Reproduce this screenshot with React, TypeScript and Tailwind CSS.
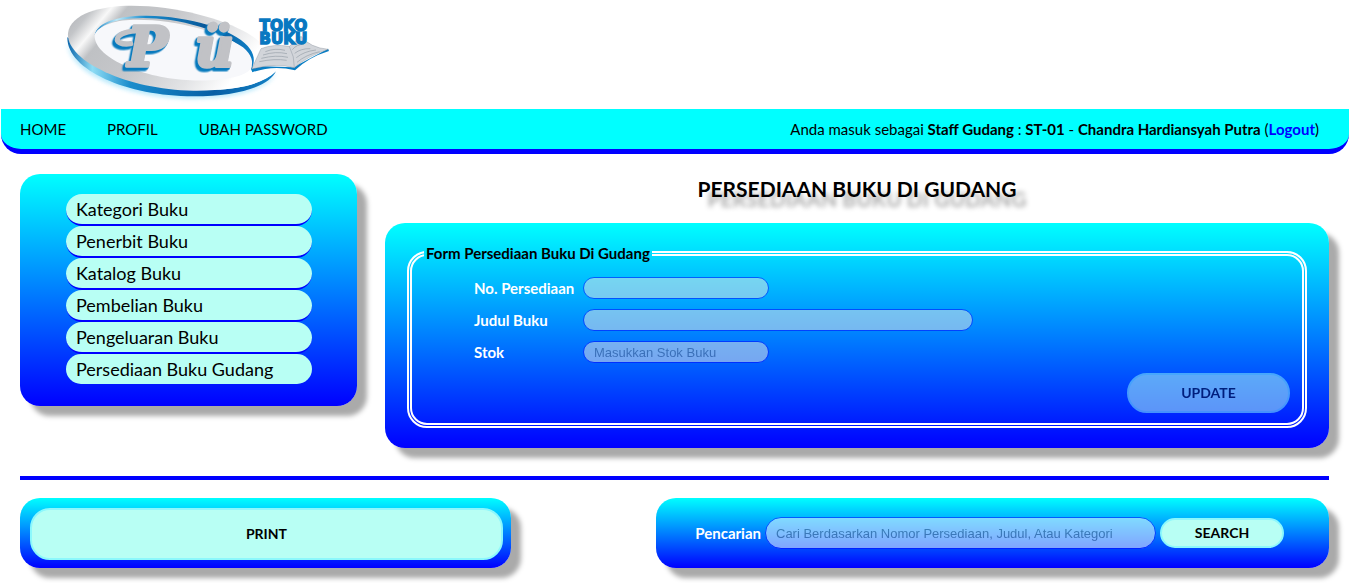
import type { ReactNode } from "react";

const menu = [
  "Kategori Buku",
  "Penerbit Buku",
  "Katalog Buku",
  "Pembelian Buku",
  "Pengeluaran Buku",
  "Persediaan Buku Gudang",
];

function Logo() {
  return (
    <svg viewBox="0 0 840 315" className="ml-[60px] block h-[105px] w-[280px]" role="img" aria-label="Toko Buku">
      <defs>
        <linearGradient id="ring" x1="0" y1="0" x2="1" y2="0.35">
          <stop offset="0" stopColor="#a9abb0" />
          <stop offset="0.12" stopColor="#c3c5c8" />
          <stop offset="0.2" stopColor="#f8f8f8" />
          <stop offset="0.27" stopColor="#bfc1c4" />
          <stop offset="0.5" stopColor="#c6c7ca" />
          <stop offset="0.8" stopColor="#e2e3e5" />
          <stop offset="1" stopColor="#ffffff" />
        </linearGradient>
        <linearGradient id="rim" x1="0" y1="0" x2="1" y2="0">
          <stop offset="0" stopColor="#0a66ac" />
          <stop offset="0.12" stopColor="#8edcf4" />
          <stop offset="0.3" stopColor="#1b8dcc" />
          <stop offset="0.7" stopColor="#075fa5" />
          <stop offset="1" stopColor="#1482c6" />
        </linearGradient>
        <linearGradient id="innerRim" x1="0" y1="0" x2="1" y2="0">
          <stop offset="0" stopColor="#1782c4" />
          <stop offset="0.14" stopColor="#bdeafa" />
          <stop offset="0.32" stopColor="#198bcc" />
          <stop offset="0.7" stopColor="#075799" />
          <stop offset="1" stopColor="#0f7fc6" />
        </linearGradient>
        <filter id="glow" x="-10%" y="-10%" width="120%" height="130%">
          <feGaussianBlur stdDeviation="7" />
        </filter>
        <filter id="relief" x="-10%" y="-10%" width="120%" height="120%" colorInterpolationFilters="sRGB">
          <feDropShadow dx="-4" dy="5" stdDeviation="0" floodColor="#087abd" result="near" />
          <feDropShadow in="near" dx="-4" dy="5" stdDeviation="0" floodColor="#087abd" />
        </filter>
      </defs>
      <path d="M22 125C24 222 205 296 400 296C535 296 625 265 648 220C610 257 535 275 410 277C210 271 50 212 22 125Z" fill="#a8e4fa" filter="url(#glow)" opacity="0.8" />
      <path d="M22 112C20 210 200 289 400 289C535 289 630 258 648 213C608 253 530 272 410 270L120 160Z" fill="url(#rim)" />
      <path d="M24 100C30 40 125 17 215 17C350 17 490 57 562 99C615 130 635 165 628 190C610 240 520 274 400 272C195 268 18 180 24 100Z" fill="url(#ring)" />
      <path d="M590 150C645 170 650 205 648 214C610 252 540 266 470 270C550 252 600 218 590 150Z" fill="#fff" />
      <path d="M104 105C112 65 180 46 260 47C390 49 520 88 563 138C584 162 586 183 575 207C579 160 520 110 420 80C330 53 240 48 180 60C140 68 112 86 104 105Z" fill="url(#innerRim)" />
      <path d="M104 105C112 80 160 60 220 59C350 57 490 98 549 142C575 165 582 185 572 207C550 234 470 246 380 240C240 232 100 170 104 105Z" fill="#f7f8fb" />
      <g filter="url(#relief)">
        <path d="M212 131C154 139 156 92 242 92" fill="none" stroke="#c1c2c6" strokeWidth="16" strokeLinecap="round" />
        <g
          fontFamily="DejaVu Serif"
          fontWeight="700"
          fontStyle="italic"
          fontSize="160"
          strokeLinejoin="round"
          fill="#c1c2c6"
          stroke="#c1c2c6"
          strokeWidth="10"
        >
          <text x="203" y="198">P</text>
          <text x="405" y="198">ü</text>
        </g>
      </g>
      <path d="M573 207L577 217Q640 194 705 211Q745 172 807 153L804 146L700 202L578 198Z" fill="#087dc4" />
      <path d="M603 146Q640 131 688 139L723 109Q750 143 805 148Q745 167 703 203Q645 188 575 207Z" fill="#d2d5da" stroke="#77818b" strokeWidth="1" />
      <path d="M688 139Q704 170 703 203" fill="none" stroke="#a0a8b0" strokeWidth="2" />
      <path d="M616 155Q645 143 675 151M609 165Q647 153 681 161M604 175Q648 164 684 172M598 185Q645 175 680 181M697 149Q711 132 732 133M704 160Q723 145 751 146M709 173Q732 154 768 150M711 187Q738 164 779 155" fill="none" stroke="#969fa8" strokeWidth="2" />
      <g fontFamily="DejaVu Sans" fontWeight="700" fontSize="46" fill="#0878c1" stroke="#0878c1" strokeWidth="4" textAnchor="middle">
        <text x="670" y="92">TOKO</text>
        <text x="670" y="132">BUKU</text>
      </g>
    </svg>
  );
}

function Panel({ className, children }: { className: string; children: ReactNode }) {
  return (
    <div className={`rounded-[20px] bg-linear-to-b/srgb from-[#00ffff] to-[#0000ff] shadow-[10px_10px_5px_#aaaaaa] ${className}`}>
      {children}
    </div>
  );
}

const field =
  "h-[22px] rounded-full border border-[#0000ff] bg-[#ebebe4] px-2.5 font-['Liberation_Sans',sans-serif] text-[13px] font-normal opacity-50 placeholder:text-[#757575] placeholder:opacity-100";

export default function App() {
  return (
    <div className="bg-white pb-[15px] font-[Lato,sans-serif] text-black">
      <header className="h-[109px]">
        <Logo />
      </header>
      <nav className="mx-px flex h-[45px] items-center justify-between rounded-b-[20px] border-b-[5px] border-[#0000ff] bg-[#00ffff] pr-[30px] pl-[19px]">
        <div className="flex gap-[41px] text-[15px]">
          <a href="#home">HOME</a>
          <a href="#profil">PROFIL</a>
          <a href="#password">UBAH PASSWORD</a>
        </div>
        <p className="text-[15px]">
          Anda masuk sebagai <b>Staff Gudang</b> : <b>ST-01</b> - <b>Chandra Hardiansyah Putra</b> (
          <a href="#logout" className="font-bold text-[#0000ff]">Logout</a>)
        </p>
      </nav>

      <div className="mt-5 mr-[21px] ml-5 flex items-start gap-7 border-b-4 border-[#0000ff] pb-7">
        <Panel className="w-[337px] shrink-0 pt-5 pr-[45px] pb-[22px] pl-[46px]">
          <ul>
            {menu.map((name) => (
              <li key={name} className="group">
                <a
                  href="#menu"
                  className="flex h-8 items-center rounded-[16px] border-b-2 border-[#0000ff] bg-[#b8fff4] px-2.5 text-lg group-last:h-[30px] group-last:rounded-[15px] group-last:border-b-0"
                >
                  {name}
                </a>
              </li>
            ))}
          </ul>
        </Panel>

        <main className="min-w-0 flex-1">
          <h1 className="mb-[19px] text-center text-[21px] leading-[30px] font-bold [text-shadow:10px_10px_5px_#aaaaaa]">
            PERSEDIAAN BUKU DI GUDANG
          </h1>
          <Panel className="p-5">
            <fieldset className="mx-0.5 rounded-[20px] border-[5px] border-double border-white px-3 pb-2.5">
              <legend className="px-0.5 text-[15px] leading-5 font-bold">Form Persediaan Buku Di Gudang</legend>
              <div className="mt-3.5 ml-[50px] grid grid-cols-[109px_1fr] items-center gap-y-2.5 text-[15px] leading-5 font-bold text-white">
                <label htmlFor="nomor">No. Persediaan</label>
                <input id="nomor" disabled className={`${field} w-[186px]`} />
                <label htmlFor="judul">Judul Buku</label>
                <input id="judul" disabled className={`${field} w-[390px]`} />
                <label htmlFor="stok">Stok</label>
                <input id="stok" disabled placeholder="Masukkan Stok Buku" className={`${field} w-[186px]`} />
              </div>
              <div className="mt-2.5 flex justify-end">
                <button disabled className="h-10 w-[163px] rounded-full border-2 border-[#8cf8fc] bg-[#b8fff4] text-sm font-bold opacity-50">
                  UPDATE
                </button>
              </div>
            </fieldset>
          </Panel>
        </main>
      </div>

      <div className="mt-[18px] mr-[21px] ml-5 flex justify-between">
        <Panel className="h-[70px] w-[37.5%] pt-2.5 pr-2 pb-2 pl-2.5">
          <button className="h-full w-full rounded-[20px] border-2 border-[#8cf8fc] bg-[#b8fff4] text-sm font-bold">PRINT</button>
        </Panel>
        <Panel className="flex h-[70px] w-[673px] items-center justify-end gap-1 pr-[45px]">
          <label htmlFor="cari" className="text-[15px] font-bold text-white">Pencarian</label>
          <input
            id="cari"
            placeholder="Cari Berdasarkan Nomor Persediaan, Judul, Atau Kategori"
            className="h-8 w-[391px] rounded-full border border-[#0000ff] bg-white px-2.5 font-['Liberation_Sans',sans-serif] text-[13px] opacity-50 placeholder:text-[#757575] placeholder:opacity-100"
          />
          <button className="h-[30px] w-[124px] rounded-full border-2 border-[#8cf8fc] bg-[#b8fff4] text-sm font-bold">SEARCH</button>
        </Panel>
      </div>
    </div>
  );
}
